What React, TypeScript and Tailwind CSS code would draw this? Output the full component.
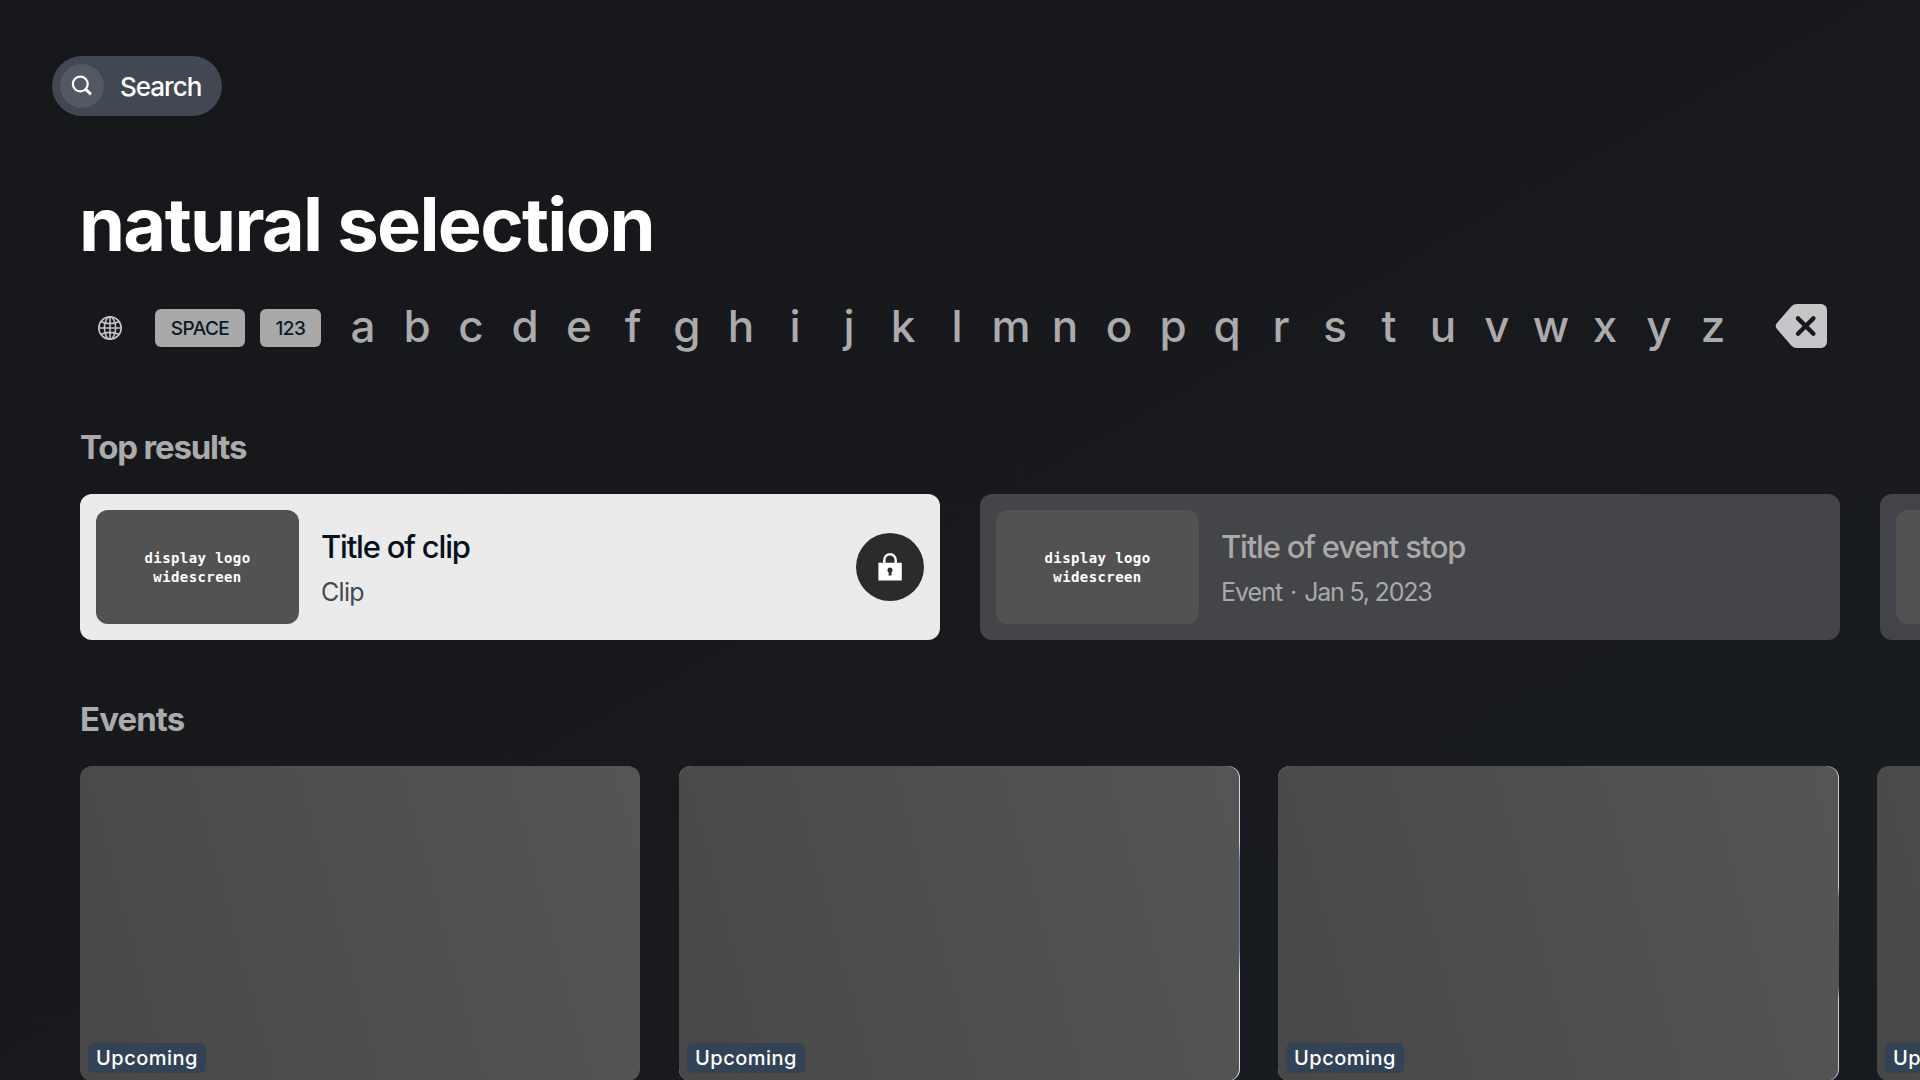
import React from 'react';

const LETTERS = 'abcdefghijklmnopqrstuvwxyz'.split('');

function Thumb({ label = '' }: { label?: string }) {
  return (
    <div className="flex h-[114px] w-[203px] shrink-0 items-center justify-center rounded-xl bg-[#525252] pt-0.5 text-center font-['DejaVu_Sans_Mono',monospace] text-[14px] leading-[19px] font-bold tracking-[0.4px] whitespace-pre text-white">
      {label}
    </div>
  );
}

function LockBadge() {
  return (
    <div className="flex size-[68px] shrink-0 items-center justify-center rounded-full bg-[#2b2b2d]">
      <svg width="24" height="28" viewBox="0 0 24 28" fill="none">
        <path d="M6.3 11V7a5.7 5.7 0 0 1 11.4 0v4" stroke="#fff" strokeWidth="2.4" />
        <path fillRule="evenodd" fill="#fff" d="M0.4 9.8h23.4v17.6H0.4zM12 14.4a2.7 2.7 0 0 0-1.3 5l-.2 3h3l-.2-3A2.7 2.7 0 0 0 12 14.4z" />
      </svg>
    </div>
  );
}

function EventCard({ edge = 'w-[560px]' }: { edge?: string }) {
  return (
    <div className="w-[599px] shrink-0">
      <div className={`rounded-xl ${edge}`}>
        <div className="flex h-[315px] w-[560px] items-end rounded-xl bg-[linear-gradient(75deg,#484848,#555555)] p-2">
          <span className="flex h-[30px] w-[118px] items-center justify-center rounded-md bg-[#334255] text-[20px] font-medium tracking-[0.5px] text-white">Upcoming</span>
        </div>
      </div>
    </div>
  );
}

export default function App() {
  return (
    <div className="h-[1080px] w-[1920px] overflow-hidden bg-linear-to-br from-[#16171b] via-[#18191d] to-[#181c21] font-['Inter',sans-serif]">
      <header className="px-[52px] pt-14">
        <button className="flex h-[60px] w-[170px] items-center gap-4 rounded-full bg-[#414851] pl-2 text-[26px] font-medium tracking-[-1px] text-white">
          <span className="flex size-11 items-center justify-center rounded-full bg-[#525963]">
            <svg width="22" height="22" viewBox="0 0 22 22" fill="none" stroke="#fff" strokeWidth="2.2">
              <circle cx="9.3" cy="9" r="7.4" />
              <path d="M14.4 14l5.6 5.4" strokeWidth="3" />
            </svg>
          </span>
          Search
        </button>
      </header>
      <h1 className="mt-[65px] h-[86px] pl-[79px] text-[74px] leading-[86px] font-bold tracking-[-1.7px] text-white">natural selection</h1>
      <div className="mt-[31px] flex h-[60px] items-center pl-[97px] text-[#ababab]">
        <svg width="26" height="26" viewBox="0 0 26 26" fill="none" stroke="#c4c4c6" strokeWidth="1.6">
          <circle cx="13" cy="13" r="11.2" />
          <ellipse cx="13" cy="13" rx="5.6" ry="11.2" />
          <path d="M13 1.8v22.4M1.8 13h22.4M4 6.8q9 3.6 18 0M4 19.2q9-3.6 18 0" />
        </svg>
        <span className="ml-8 flex h-[38px] w-[90px] items-center justify-center rounded-md bg-[#a9a9a9] pt-0.5 text-[19px] font-medium tracking-[-0.5px] text-[#0b1a28]">SPACE</span>
        <span className="ml-[15px] flex h-[38px] w-[61px] items-center justify-center rounded-md bg-[#a9a9a9] pt-0.5 text-[19px] font-medium tracking-[-0.5px] text-[#0b1a28]">123</span>
        <div className="mb-[5px] ml-[15px] flex">
          {LETTERS.map((l) => (
            <span key={l} className="w-[54px] text-center text-[44px] leading-[60px] font-medium">{l}</span>
          ))}
        </div>
        <svg className="mb-[4px] ml-[35px]" width="52" height="44" viewBox="0 0 52 44">
          <path d="M22 0H46a6 6 0 0 1 6 6V38a6 6 0 0 1-6 6H22a8 8 0 0 1-5.5-2.2L2 25a4.5 4.5 0 0 1 0-6L16.5 2.2A8 8 0 0 1 22 0z" fill="#c5c6c8" />
          <path d="M23 14.4l15.4 15.4M38.4 14.4L23 29.8" stroke="#18191d" strokeWidth="4.4" strokeLinecap="round" />
        </svg>
      </div>
      <h2 className="mt-[69px] pl-20 text-[33px] leading-10 font-bold tracking-[-1.2px] text-[#ababab]">Top results</h2>
      <div className="mt-[27px] flex gap-10 pl-20">
        <div className="flex h-[146px] w-[860px] shrink-0 items-center rounded-xl bg-[#ebebeb] p-4">
          <Thumb label={'display logo\nwidescreen'} />
          <div className="ml-[22px] flex-1">
            <div className="text-[31px] leading-10 font-medium tracking-[-1.2px] text-[#06111f]">Title of clip</div>
            <div className="mt-[9px] text-[25px] leading-8 tracking-[-0.7px] text-[#434a54]">Clip</div>
          </div>
          <LockBadge />
        </div>
        <div className="flex h-[146px] w-[860px] shrink-0 items-center rounded-xl bg-[#444548] p-4">
          <Thumb label={'display logo\nwidescreen'} />
          <div className="ml-[22px] flex-1 text-[#a9a9aa]">
            <div className="text-[31px] leading-10 font-medium tracking-[-1.2px]">Title of event stop</div>
            <div className="mt-[9px] flex text-[25px] leading-8 tracking-[-1px]">
              <span>Event</span>
              <span className="w-[22px] text-center">·</span>
              <span className="tracking-[-1.2px]">Jan 5, 2023</span>
            </div>
          </div>
        </div>
        <div className="flex h-[146px] w-[860px] shrink-0 items-center rounded-xl bg-[#434449] p-4">
          <Thumb />
        </div>
      </div>
      <h2 className="mt-[59px] pl-20 text-[33px] leading-10 font-bold tracking-[-0.9px] text-[#ababab]">Events</h2>
      <div className="mt-[27px] flex pl-20">
        <EventCard />
        <EventCard edge="w-[561px] bg-[linear-gradient(180deg,#d5dae0_0%,#d5dae0_24%,#6685b0_30%,#6685b0_58%,#e6e6e6_66%)]" />
        <EventCard edge="w-[561px] bg-[linear-gradient(180deg,#c5cbd8_0%,#c5cbd8_38%,#5f666d_42%,#4a5157_70%,#c5cbd8_74%)]" />
        <EventCard />
      </div>
    </div>
  );
}
